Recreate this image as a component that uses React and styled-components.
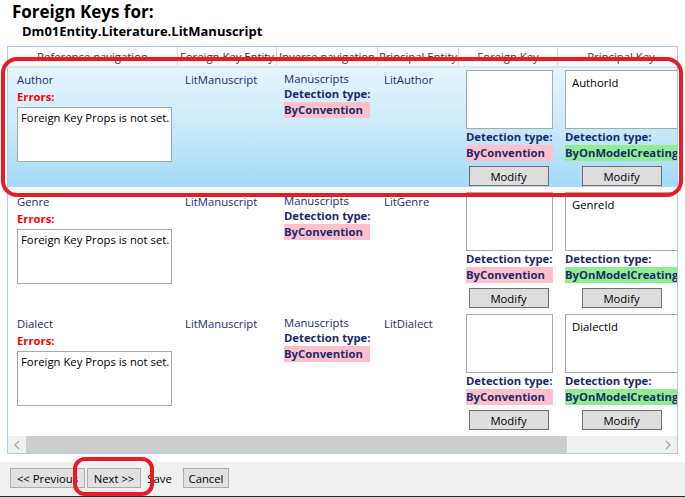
import React from "react";
import styled, { createGlobalStyle } from "styled-components";

const GlobalStyle = createGlobalStyle`
  body {
    margin: 0;
    background: #fff;
    font-family: "Open Sans", "Noto Sans", sans-serif;
    font-size: 11.3px;
  }
`;

const Page = styled.div`
  position: relative;
  width: 685px;
  height: 497px;
  display: flex;
  flex-direction: column;
  overflow: hidden;
`;

const Title = styled.h1`
  margin: 0;
  padding: 1px 0 0 12px;
  font-size: 17px;
  line-height: 22px;
  font-weight: 700;
  color: #000;
`;

const SubTitle = styled.h2`
  margin: 0;
  padding-left: 22px;
  font-size: 13px;
  line-height: 16px;
  font-weight: 700;
  color: #000;
`;

const Frame = styled.div`
  margin: 7px 0 0 7px;
  width: 671px;
  height: 408px;
  box-sizing: border-box;
  border: 1px solid #a8cfe9;
  display: flex;
  flex-direction: column;
`;

const Viewport = styled.div`
  flex: 1;
  overflow: hidden;
`;

const cols = "170px 99px 101px 81px 99px 127px";

const HeaderRow = styled.div`
  display: grid;
  grid-template-columns: ${cols};
  width: 677px;
  height: 20px;
  box-sizing: border-box;
  border-bottom: 1px solid #e6e6e6;
  background: linear-gradient(#ffffff, #f7f7f7);
`;

const HeaderCell = styled.div`
  border-right: 1px solid #d9d9d9;
  color: #3a3a3a;
  text-align: center;
  line-height: 19px;
  white-space: nowrap;
  overflow: hidden;
`;

const Row = styled.div`
  display: grid;
  grid-template-columns: ${cols};
  width: 677px;
  height: 122px;
  box-sizing: border-box;
  background: ${(p) =>
    p.$selected ? "linear-gradient(#e4f5fd, #cdebfa 45%, #a2d9f6)" : "#fff"};
  border-top: 1px solid ${(p) => (p.$selected ? "#c9e9f9" : "transparent")};
  border-bottom: 2px solid #fff;
`;

const NavCell = styled.div`
  padding: 3px 6px 0 9px;
`;

const Name = styled.div`
  color: #1d2b74;
  line-height: ${(p) => p.$lh || 17}px;
  white-space: nowrap;
`;

const ErrLabel = styled.div`
  color: #f00;
  font-weight: 700;
  line-height: 17px;
`;

const ErrBox = styled.div`
  margin-top: 2px;
  width: 155px;
  height: 55px;
  box-sizing: border-box;
  border: 1px solid #a9a9a9;
  background: #fff;
  padding: 2px 3px;
  color: #000;
  white-space: nowrap;
`;

const TextCell = styled.div`
  padding: ${(p) => `3px 6px 0 ${p.$pad}px`};
`;

const DetLabel = styled.div`
  color: #1a2a6e;
  font-weight: 700;
  line-height: 16px;
  white-space: nowrap;
  margin-left: ${(p) => p.$indent || 0}px;
`;

const Badge = styled.div`
  width: ${(p) => p.$w}px;
  margin-left: ${(p) => p.$indent || 0}px;
  background: ${(p) => (p.$kind === "model" ? "#90ee90" : "#ffc0cb")};
  color: #1a2a6e;
  font-weight: 700;
  line-height: 16px;
  white-space: nowrap;
  overflow: hidden;
`;

const KeyCell = styled.div`
  padding-top: 2px;
  display: flex;
  flex-direction: column;
`;

const KeyBox = styled.div`
  margin-left: 7px;
  width: ${(p) => p.$w}px;
  height: 59px;
  box-sizing: border-box;
  border: 1px solid #a9a9a9;
  background: #fff;
  padding: 4px 6px;
  color: #000;
`;

const ModifyButton = styled.button`
  align-self: center;
  margin-top: 5px;
  width: 80px;
  height: 20px;
  padding: 0;
  border: 1px solid #707070;
  background: #dddddd;
  font-family: inherit;
  font-size: 11.3px;
  color: #000;
`;

const ScrollBar = styled.div`
  height: 17px;
  display: flex;
  align-items: center;
  background: #f0f0f0;
`;

const ArrowBox = styled.div`
  width: 18px;
  height: 17px;
  display: flex;
  align-items: center;
  justify-content: center;
`;

const Thumb = styled.div`
  width: 541px;
  height: 17px;
  background: #cdcdcd;
`;

const Track = styled.div`
  flex: 1;
`;

const Footer = styled.div`
  margin-top: 8px;
  flex: 1;
  background: #f0f0f0;
  border-bottom: 1px solid #25292f;
  display: flex;
  align-items: flex-start;
  padding: 6px 0 0 10px;
`;

const FootButton = styled.button`
  width: ${(p) => p.$w}px;
  height: 20px;
  padding: 0;
  margin-right: ${(p) => p.$gap || 0}px;
  border: 1px solid ${(p) => (p.$plain ? "transparent" : "#adadad")};
  background: ${(p) => (p.$plain ? "transparent" : "#e1e1e1")};
  font-family: inherit;
  font-size: 11.3px;
  color: #000;
  white-space: nowrap;
`;

const Mark = styled.div`
  position: absolute;
  left: ${(p) => p.$x}px;
  top: ${(p) => p.$y}px;
  width: ${(p) => p.$w}px;
  height: ${(p) => p.$h}px;
  box-sizing: border-box;
  border: 4px solid #e91c24;
  border-radius: ${(p) => p.$r}px;
  pointer-events: none;
`;

const headers = [
  "Reference navigation",
  "Foreign Key Entity",
  "Inverse navigation",
  "Principal Entity",
  "Foreign Key",
  "Principal Key",
];

const rows = [
  { nav: "Author", principal: "LitAuthor", pk: "AuthorId", selected: true },
  { nav: "Genre", principal: "LitGenre", pk: "GenreId" },
  { nav: "Dialect", principal: "LitDialect", pk: "DialectId" },
];

function Chevron({ dir }) {
  const d = dir === "left" ? "M5 1 L1 5 L5 9" : "M1 1 L5 5 L1 9";
  return (
    <svg width="6" height="10" viewBox="0 0 6 10">
      <path d={d} fill="none" stroke="#a3a3a3" strokeWidth="1.2" />
    </svg>
  );
}

export default function App() {
  return (
    <Page>
      <GlobalStyle />
      <Title>Foreign Keys for:</Title>
      <SubTitle>Dm01Entity.Literature.LitManuscript</SubTitle>
      <Frame>
        <Viewport>
          <HeaderRow>
            {headers.map((h) => (
              <HeaderCell key={h}>{h}</HeaderCell>
            ))}
          </HeaderRow>
          {rows.map((r) => (
            <Row key={r.nav} $selected={r.selected}>
              <NavCell>
                <Name>{r.nav}</Name>
                <ErrLabel>Errors:</ErrLabel>
                <ErrBox>Foreign Key Props is not set.</ErrBox>
              </NavCell>
              <TextCell $pad={7}>
                <Name>LitManuscript</Name>
              </TextCell>
              <TextCell $pad={7}>
                <Name $lh={15}>Manuscripts</Name>
                <DetLabel>Detection type:</DetLabel>
                <Badge $w={86}>ByConvention</Badge>
              </TextCell>
              <TextCell $pad={6}>
                <Name>{r.principal}</Name>
              </TextCell>
              <KeyCell>
                <KeyBox $w={87} />
                <DetLabel $indent={7}>Detection type:</DetLabel>
                <Badge $w={87} $indent={7}>ByConvention</Badge>
                <ModifyButton>Modify</ModifyButton>
              </KeyCell>
              <KeyCell>
                <KeyBox $w={116}>{r.pk}</KeyBox>
                <DetLabel $indent={7}>Detection type:</DetLabel>
                <Badge $w={116} $indent={7} $kind="model">
                  ByOnModelCreating
                </Badge>
                <ModifyButton>Modify</ModifyButton>
              </KeyCell>
            </Row>
          ))}
        </Viewport>
        <ScrollBar>
          <ArrowBox>
            <Chevron dir="left" />
          </ArrowBox>
          <Thumb />
          <Track />
          <ArrowBox>
            <Chevron dir="right" />
          </ArrowBox>
        </ScrollBar>
      </Frame>
      <Footer>
        <FootButton $w={75} $gap={2}>&lt;&lt; Previous</FootButton>
        <FootButton $w={54}>Next &gt;&gt;</FootButton>
        <FootButton $w={37} $gap={5} $plain>
          Save
        </FootButton>
        <FootButton $w={46}>Cancel</FootButton>
      </Footer>
      <Mark $x={1} $y={57} $w={682} $h={140} $r={16} />
      <Mark $x={73} $y={457} $w={81} $h={39} $r={12} />
    </Page>
  );
}
